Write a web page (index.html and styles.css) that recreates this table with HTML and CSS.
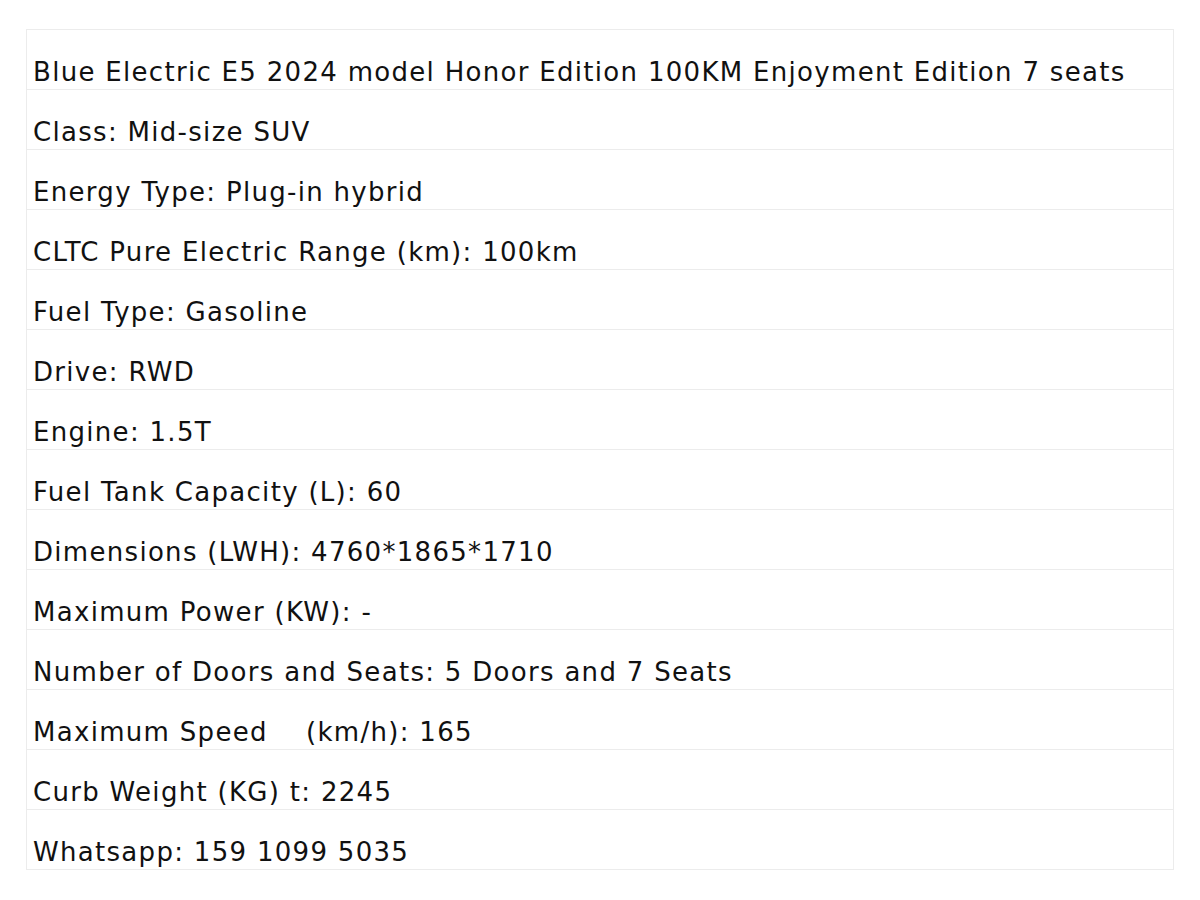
FILE: index.html
```html
<!DOCTYPE html>
<html>
<head>
<meta charset="utf-8">
<link rel="stylesheet" href="styles.css">
</head>
<body>
<div class="sheet">
  <div class="row">Blue Electric E5 2024 model Honor Edition 100KM Enjoyment Edition 7 seats</div>
  <div class="row">Class: Mid-size SUV</div>
  <div class="row">Energy Type: Plug-in hybrid</div>
  <div class="row">CLTC Pure Electric Range (km): 100km</div>
  <div class="row">Fuel Type: Gasoline</div>
  <div class="row">Drive: RWD</div>
  <div class="row">Engine: 1.5T</div>
  <div class="row">Fuel Tank Capacity (L): 60</div>
  <div class="row">Dimensions (LWH): 4760*1865*1710</div>
  <div class="row">Maximum Power (KW): -</div>
  <div class="row">Number of Doors and Seats: 5 Doors and 7 Seats</div>
  <div class="row">Maximum Speed&nbsp;&nbsp;&nbsp;&nbsp;(km/h): 165</div>
  <div class="row">Curb Weight (KG) t: 2245</div>
  <div class="row">Whatsapp: 159 1099 5035</div>
</div>
</body>
</html>
```
FILE: styles.css
```css
html, body {
  margin: 0;
  padding: 0;
  background: #ffffff;
}
body {
  padding: 29px 26px 0 26px;
  font-family: "DejaVu Sans", "Liberation Sans", sans-serif;
  color: #111111;
}
.sheet {
  width: 1146px;
  border: 1px solid #ececec;
  border-bottom: none;
  display: flex;
  flex-direction: column;
}
.row {
  height: 59px;
  border-bottom: 1px solid #ececec;
  display: flex;
  align-items: flex-end;
  padding-left: 6px;
  font-size: 26px;
  line-height: 34px;
  letter-spacing: 1.3px;
  white-space: pre;
}
```
